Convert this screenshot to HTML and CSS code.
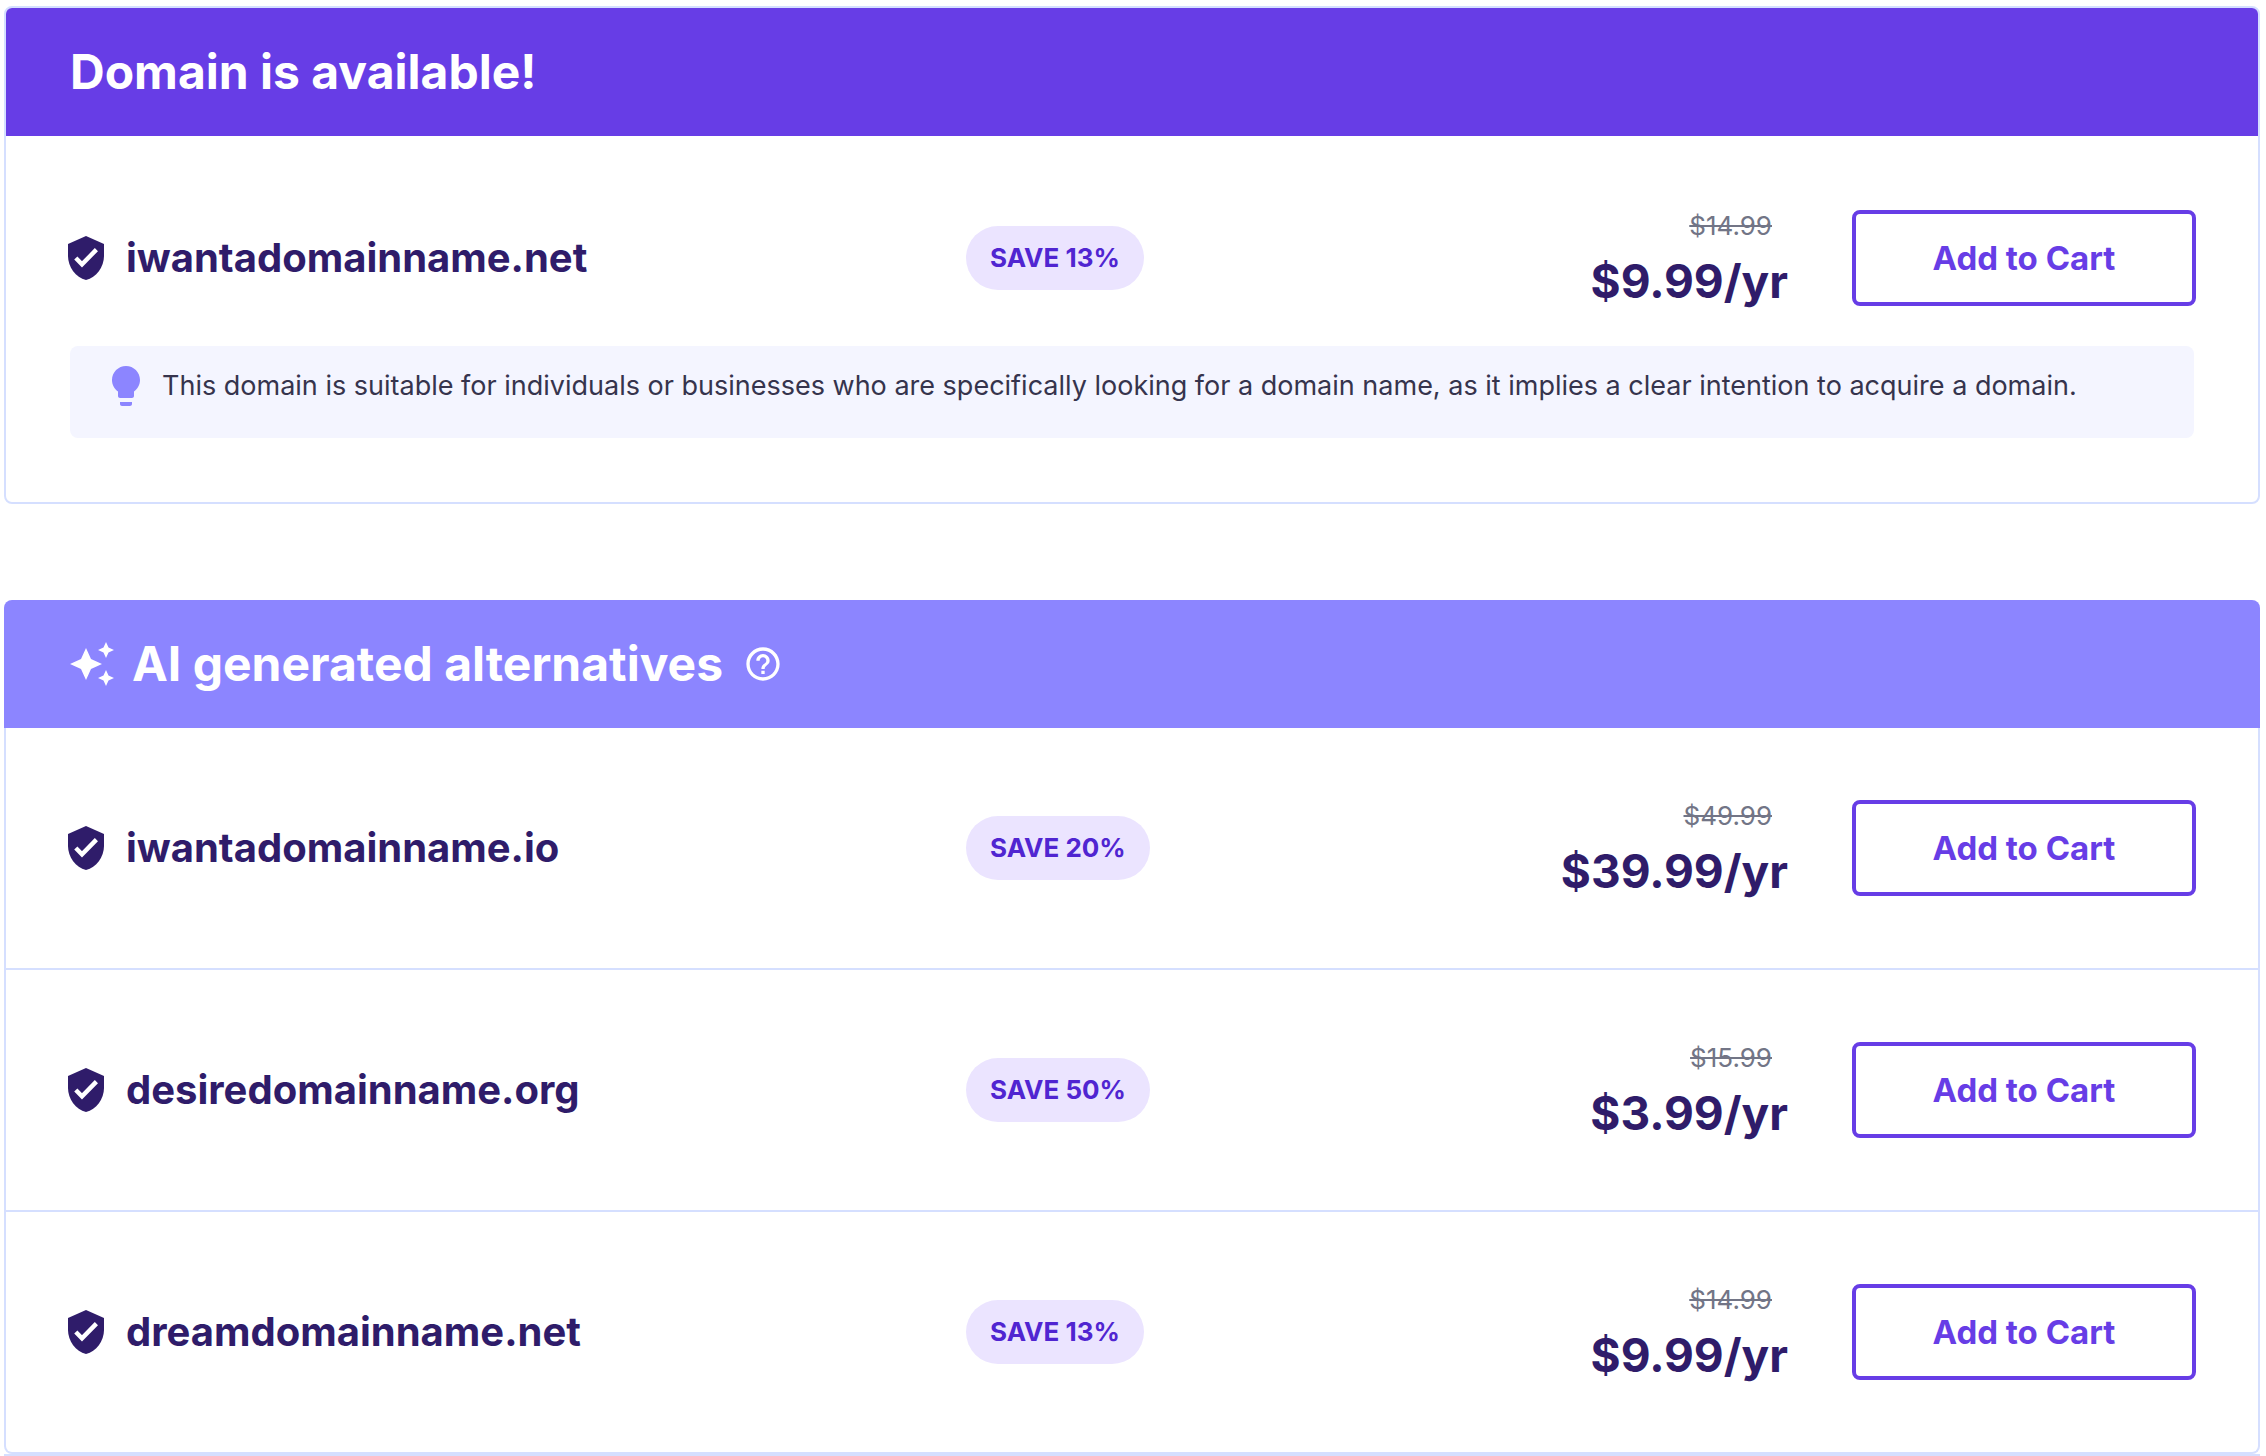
FILE: index.html
```html
<!DOCTYPE html>
<html lang="en">
<head>
<meta charset="utf-8">
<title>Domain search results</title>
<link rel="stylesheet" href="styles.css">
</head>
<body>
<svg class="sprite" aria-hidden="true">
  <symbol id="shield" viewBox="0 0 24 24">
    <path fill="currentColor" d="M12 1L3 5v6c0 5.550 3.840 10.740 9 12 5.160-1.260 9-6.450 9-12V5z"/>
    <path fill="none" stroke="#fff" stroke-width="2.200" d="M6.900 12l3.100 3.200 7.200-7.400"/>
  </symbol>
  <symbol id="bulb" viewBox="0 0 24 24">
    <path fill="currentColor" d="M9 21c0 .55.45 1 1 1h4c.55 0 1-.45 1-1v-1H9v1zm3-19C8.140 2 5 5.140 5 9c0 2.380 1.190 4.470 3 5.740V17c0 .55.45 1 1 1h6c.55 0 1-.45 1-1v-2.260c1.810-1.270 3-3.360 3-5.740 0-3.860-3.140-7-7-7z"/>
  </symbol>
  <symbol id="sparkles" viewBox="0 0 24 24">
    <path fill="currentColor" d="M19 9l1.250-2.750L23 5l-2.750-1.250L19 1l-1.250 2.750L15 5l2.750 1.250zM11.500 9.500L9 4 6.500 9.500 1 12l5.500 2.500L9 20l2.500-5.500L17 12zM19 15l-1.250 2.750L15 19l2.750 1.250L19 23l1.250-2.750L23 19l-2.750-1.250z"/>
  </symbol>
  <symbol id="help" viewBox="0 0 24 24">
    <path fill="currentColor" d="M11 18h2v-2h-2v2zm1-16C6.480 2 2 6.480 2 12s4.480 10 10 10 10-4.480 10-10S17.520 2 12 2zm0 18c-4.410 0-8-3.590-8-8s3.590-8 8-8 8 3.590 8 8-3.590 8-8 8zm0-14c-2.210 0-4 1.790-4 4h2c0-1.100.9-2 2-2s2 .9 2 2c0 2-3 1.750-3 5h2c0-2.250 3-2.500 3-5 0-2.210-1.790-4-4-4z"/>
  </symbol>
</svg>
<main class="results">
  <section class="card card-available">
    <header class="card-header"><h2 class="card-title">Domain is available!</h2></header>
    <div class="domain">
      <div class="domain-name"><svg class="icon"><use href="#shield"/></svg><h3 class="name">iwantadomainname.net</h3></div>
      <div class="offer">
        <span class="badge">SAVE 13%</span>
        <div class="prices"><s class="price-old">$14.99</s><strong class="price">$9.99/yr</strong></div>
      </div>
      <button class="add" type="button">Add to Cart</button>
    </div>
    <div class="tip">
      <svg class="icon icon-tip"><use href="#bulb"/></svg>
      <p class="tip-text">This domain is suitable for individuals or businesses who are specifically looking for a domain name, as it implies a clear intention to acquire a domain.</p>
    </div>
  </section>

  <section class="alternatives">
    <header class="card-header card-header-ai">
      <svg class="icon"><use href="#sparkles"/></svg>
      <h2 class="card-title">AI generated alternatives</h2>
      <button class="help" type="button" aria-label="About AI generated alternatives"><svg class="help-icon"><use href="#help"/></svg></button>
    </header>
    <ul class="domain-list">
      <li class="domain">
        <div class="domain-name"><svg class="icon"><use href="#shield"/></svg><h3 class="name">iwantadomainname.io</h3></div>
        <div class="offer">
          <span class="badge">SAVE 20%</span>
          <div class="prices"><s class="price-old">$49.99</s><strong class="price">$39.99/yr</strong></div>
        </div>
        <button class="add" type="button">Add to Cart</button>
      </li>
      <li class="domain">
        <div class="domain-name"><svg class="icon"><use href="#shield"/></svg><h3 class="name">desiredomainname.org</h3></div>
        <div class="offer">
          <span class="badge">SAVE 50%</span>
          <div class="prices"><s class="price-old">$15.99</s><strong class="price">$3.99/yr</strong></div>
        </div>
        <button class="add" type="button">Add to Cart</button>
      </li>
      <li class="domain">
        <div class="domain-name"><svg class="icon"><use href="#shield"/></svg><h3 class="name">dreamdomainname.net</h3></div>
        <div class="offer">
          <span class="badge">SAVE 13%</span>
          <div class="prices"><s class="price-old">$14.99</s><strong class="price">$9.99/yr</strong></div>
        </div>
        <button class="add" type="button">Add to Cart</button>
      </li>
    </ul>
  </section>
</main>
</body>
</html>
```
FILE: styles.css
```css
:root {
  --primary: #673de6;
  --primary-dark: #2f1c6a;
  --lavender: #8c85ff;
  --border: #d5dfff;
}

* {
  box-sizing: border-box;
}

body,
h2,
h3,
p,
ul {
  margin: 0;
  padding: 0;
}

body {
  background: #fff;
  color: var(--primary-dark);
  font-family: Inter, "Open Sans", sans-serif;
}

.sprite {
  position: absolute;
  width: 0;
  height: 0;
}

.results {
  display: flex;
  flex-direction: column;
  gap: 96px;
  padding: 6px 6px 0 4px;
}

.card {
  border: 2px solid var(--border);
  border-radius: 8px;
  overflow: hidden;
}

.card-header {
  display: flex;
  align-items: center;
  gap: 16px;
  min-height: 128px;
  padding: 0 64px;
  background: var(--primary);
  color: #fff;
}

.card-header-ai {
  border-radius: 8px 8px 0 0;
  background: var(--lavender);
}

.card-title {
  font-size: 48px;
  font-weight: 700;
  line-height: 64px;
}

.icon {
  flex: none;
  width: 48px;
  height: 48px;
}

.icon-tip {
  color: var(--lavender);
}

.help {
  margin-left: 4px;
  padding: 0;
  border: 0;
  background: none;
  color: inherit;
  cursor: pointer;
}

.help-icon {
  display: block;
  width: 40px;
  height: 40px;
}

.alternatives {
  border-bottom: 2px solid var(--border);
}

.domain-list {
  border: 2px solid var(--border);
  border-top: 0;
  border-radius: 0 0 8px 8px;
  list-style: none;
}

.domain {
  display: grid;
  grid-template-columns: 11fr 10fr auto;
  align-items: center;
  padding: 72px 62px 72px 56px;
}

.domain + .domain {
  border-top: 2px solid var(--border);
}

.card-available .domain {
  padding-top: 74px;
  padding-bottom: 40px;
}

.domain-name {
  display: flex;
  align-items: center;
  gap: 16px;
}

.name {
  font-size: 40px;
  font-weight: 700;
  line-height: 56px;
}

.offer {
  display: flex;
  align-items: center;
  justify-content: space-between;
}

.badge {
  padding: 0 24px;
  border-radius: 32px;
  background: #ebe4ff;
  color: #5025d1;
  font-size: 26px;
  font-weight: 700;
  line-height: 64px;
}

.prices {
  display: flex;
  flex-direction: column;
  align-items: flex-end;
  gap: 14px;
}

.price-old {
  margin-right: 16px;
  color: #727586;
  font-size: 26px;
  line-height: 32px;
}

.price {
  font-size: 46px;
  font-weight: 700;
  line-height: 50px;
}

.add {
  width: 344px;
  height: 96px;
  margin-left: 64px;
  border: 4px solid var(--primary);
  border-radius: 8px;
  background: #fff;
  color: var(--primary);
  font: 700 33px Inter, "Open Sans", sans-serif;
  cursor: pointer;
}

.tip {
  display: flex;
  gap: 12px;
  margin: 0 64px 64px;
  padding: 16px 32px 28px;
  border-radius: 8px;
  background: #f4f5ff;
}

.tip-text {
  color: #36344d;
  font-size: 27px;
  line-height: 48px;
}
```
